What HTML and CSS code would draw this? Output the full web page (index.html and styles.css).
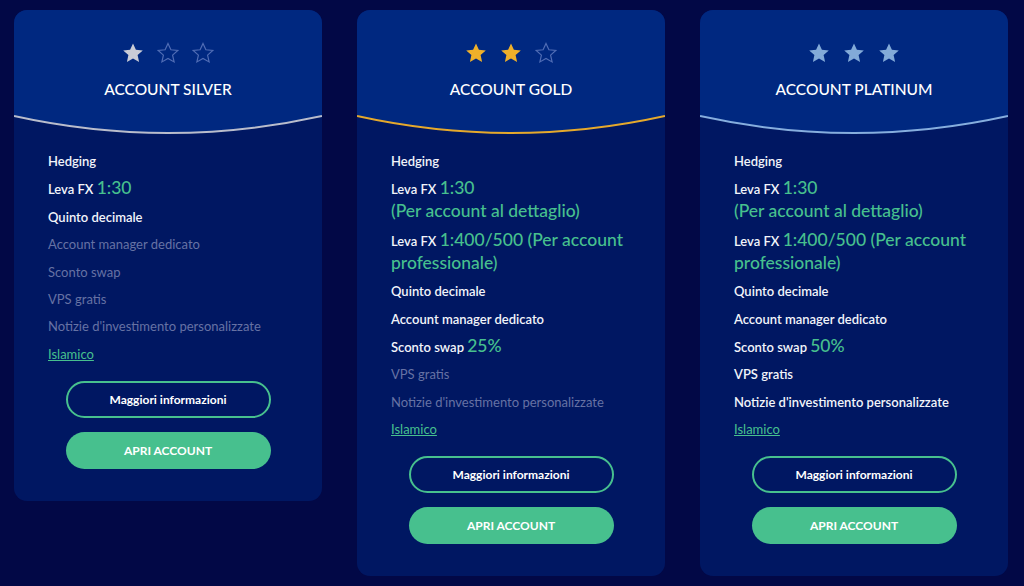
FILE: index.html
```html
<!DOCTYPE html>
<html lang="it">
<head>
    <meta charset="UTF-8">
    <meta name="viewport" content="width=device-width, initial-scale=1.0">
    <title>Tipi di account</title>
    <link rel="stylesheet" href="styles.css">
</head>
<body>
    <div class="plans">
        <!-- Silver -->
        <div class="plan silver">
            <div class="plan-header">
                <div class="stars">
                    <svg class="star full" viewBox="0 0 24 24"><path d="M12 2.5l2.9 6.3 6.9.7-5.2 4.6 1.5 6.8L12 17.4l-6.1 3.5 1.5-6.8-5.2-4.6 6.9-.7z"/></svg>
                    <svg class="star empty" viewBox="0 0 24 24"><path d="M12 2.5l2.9 6.3 6.9.7-5.2 4.6 1.5 6.8L12 17.4l-6.1 3.5 1.5-6.8-5.2-4.6 6.9-.7z"/></svg>
                    <svg class="star empty" viewBox="0 0 24 24"><path d="M12 2.5l2.9 6.3 6.9.7-5.2 4.6 1.5 6.8L12 17.4l-6.1 3.5 1.5-6.8-5.2-4.6 6.9-.7z"/></svg>
                </div>
                <h2>Account Silver</h2>
            </div>
            <svg class="curve" viewBox="0 0 308 22" preserveAspectRatio="none">
                <path class="curve-fill" d="M0 0 V2 Q154 36 308 2 V0 Z"/>
                <path class="curve-line" d="M0 2 Q154 36 308 2"/>
            </svg>
            <ul class="features">
                <li>Hedging</li>
                <li>Leva FX <span class="value">1:30</span></li>
                <li>Quinto decimale</li>
                <li class="off">Account manager dedicato</li>
                <li class="off">Sconto swap</li>
                <li class="off">VPS gratis</li>
                <li class="off">Notizie d'investimento personalizzate</li>
                <li><a href="#" class="link">Islamico</a></li>
            </ul>
            <div class="actions">
                <button class="btn btn-outline">Maggiori informazioni</button>
                <button class="btn btn-green">APRI ACCOUNT</button>
            </div>
        </div>

        <!-- Gold -->
        <div class="plan gold">
            <div class="plan-header">
                <div class="stars">
                    <svg class="star full" viewBox="0 0 24 24"><path d="M12 2.5l2.9 6.3 6.9.7-5.2 4.6 1.5 6.8L12 17.4l-6.1 3.5 1.5-6.8-5.2-4.6 6.9-.7z"/></svg>
                    <svg class="star full" viewBox="0 0 24 24"><path d="M12 2.5l2.9 6.3 6.9.7-5.2 4.6 1.5 6.8L12 17.4l-6.1 3.5 1.5-6.8-5.2-4.6 6.9-.7z"/></svg>
                    <svg class="star empty" viewBox="0 0 24 24"><path d="M12 2.5l2.9 6.3 6.9.7-5.2 4.6 1.5 6.8L12 17.4l-6.1 3.5 1.5-6.8-5.2-4.6 6.9-.7z"/></svg>
                </div>
                <h2>Account Gold</h2>
            </div>
            <svg class="curve" viewBox="0 0 308 22" preserveAspectRatio="none">
                <path class="curve-fill" d="M0 0 V2 Q154 36 308 2 V0 Z"/>
                <path class="curve-line" d="M0 2 Q154 36 308 2"/>
            </svg>
            <ul class="features">
                <li>Hedging</li>
                <li>Leva FX <span class="value">1:30<br>(Per account al dettaglio)</span></li>
                <li>Leva FX <span class="value">1:400/500 (Per account professionale)</span></li>
                <li>Quinto decimale</li>
                <li>Account manager dedicato</li>
                <li>Sconto swap <span class="value">25%</span></li>
                <li class="off">VPS gratis</li>
                <li class="off">Notizie d'investimento personalizzate</li>
                <li><a href="#" class="link">Islamico</a></li>
            </ul>
            <div class="actions">
                <button class="btn btn-outline">Maggiori informazioni</button>
                <button class="btn btn-green">APRI ACCOUNT</button>
            </div>
        </div>

        <!-- Platinum -->
        <div class="plan platinum">
            <div class="plan-header">
                <div class="stars">
                    <svg class="star full" viewBox="0 0 24 24"><path d="M12 2.5l2.9 6.3 6.9.7-5.2 4.6 1.5 6.8L12 17.4l-6.1 3.5 1.5-6.8-5.2-4.6 6.9-.7z"/></svg>
                    <svg class="star full" viewBox="0 0 24 24"><path d="M12 2.5l2.9 6.3 6.9.7-5.2 4.6 1.5 6.8L12 17.4l-6.1 3.5 1.5-6.8-5.2-4.6 6.9-.7z"/></svg>
                    <svg class="star full" viewBox="0 0 24 24"><path d="M12 2.5l2.9 6.3 6.9.7-5.2 4.6 1.5 6.8L12 17.4l-6.1 3.5 1.5-6.8-5.2-4.6 6.9-.7z"/></svg>
                </div>
                <h2>Account Platinum</h2>
            </div>
            <svg class="curve" viewBox="0 0 308 22" preserveAspectRatio="none">
                <path class="curve-fill" d="M0 0 V2 Q154 36 308 2 V0 Z"/>
                <path class="curve-line" d="M0 2 Q154 36 308 2"/>
            </svg>
            <ul class="features">
                <li>Hedging</li>
                <li>Leva FX <span class="value">1:30<br>(Per account al dettaglio)</span></li>
                <li>Leva FX <span class="value">1:400/500 (Per account professionale)</span></li>
                <li>Quinto decimale</li>
                <li>Account manager dedicato</li>
                <li>Sconto swap <span class="value">50%</span></li>
                <li>VPS gratis</li>
                <li>Notizie d'investimento personalizzate</li>
                <li><a href="#" class="link">Islamico</a></li>
            </ul>
            <div class="actions">
                <button class="btn btn-outline">Maggiori informazioni</button>
                <button class="btn btn-green">APRI ACCOUNT</button>
            </div>
        </div>
    </div>
</body>
</html>
```

FILE: styles.css
```css
* {
    margin: 0;
    padding: 0;
    box-sizing: border-box;
    font-family: Lato, 'Open Sans', sans-serif;
}

body {
    background-color: #020846;
    color: #fff;
}

.plans {
    display: flex;
    align-items: flex-start;
    gap: 35px;
    padding: 10px 14px;
}

.plan {
    width: 308px;
    flex-shrink: 0;
    background-color: #001762;
    border-radius: 13px;
    overflow: hidden;
    padding-bottom: 32px;
}

.plan-header {
    background-color: #002880;
    padding-top: 31px;
    height: 104px;
    text-align: center;
}

.stars {
    display: flex;
    justify-content: center;
    gap: 11px;
    height: 24px;
}

.star {
    width: 24px;
    height: 24px;
}

.star.empty path {
    fill: none;
    stroke: #4f6cb4;
    stroke-width: 1.2;
}

.silver .star.full path { fill: #c9ccd6; }
.gold .star.full path { fill: #efb02a; }
.platinum .star.full path { fill: #82aad8; }

.plan-header h2 {
    margin-top: 14px;
    font-size: 15.5px;
    line-height: 20px;
    font-weight: 500;
    text-transform: uppercase;
}

.curve {
    display: block;
    width: 308px;
    height: 22px;
}

.curve-fill {
    fill: #002880;
}

.curve-line {
    fill: none;
    stroke-width: 2;
}

.silver .curve-line { stroke: #b9bdcc; }
.gold .curve-line { stroke: #e5a92c; }
.platinum .curve-line { stroke: #86aede; }

.features {
    list-style: none;
    padding: 14px 34px 0;
    display: flex;
    flex-direction: column;
    gap: 5.4px;
}

.features li {
    font-size: 13px;
    line-height: 22px;
    font-weight: 600;
    color: #f2f4fa;
}

.features li.off {
    font-weight: 400;
    color: #6672a4;
}

.value {
    font-size: 17.5px;
    font-weight: 500;
    color: #47c08e;
}

.link {
    color: #47c08e;
    font-weight: 400;
    text-decoration: underline;
}

.actions {
    display: flex;
    flex-direction: column;
    align-items: center;
    gap: 14px;
    margin-top: 16px;
}

.btn {
    width: 205px;
    height: 37px;
    border-radius: 20px;
    font-size: 12px;
    font-weight: 700;
    color: #fff;
    cursor: pointer;
}

.btn-outline {
    background: transparent;
    border: 2px solid #47c08e;
}

.btn-green {
    background-color: #47c08e;
    border: none;
}
```
